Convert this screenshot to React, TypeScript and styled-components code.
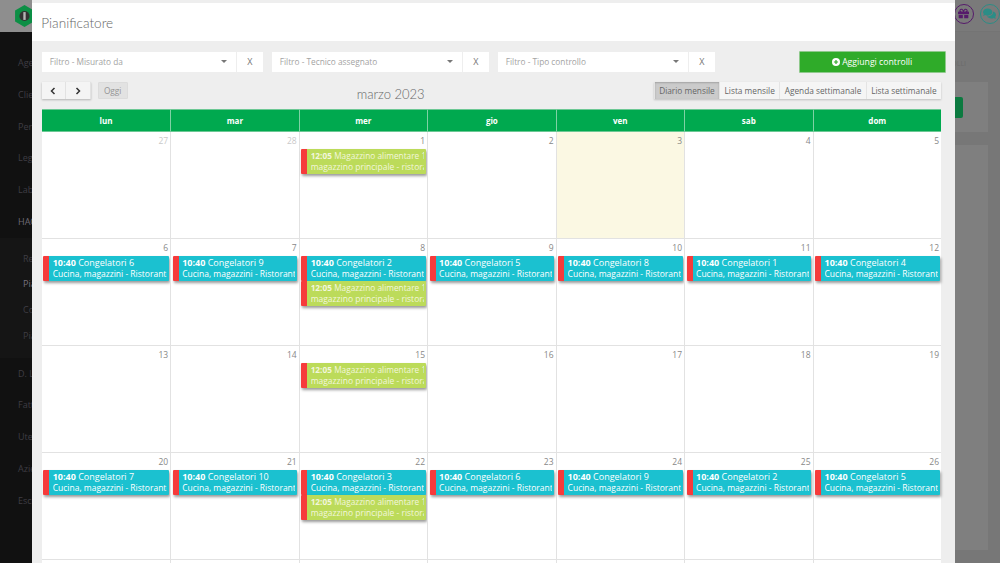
import React from "react";
import styled, { createGlobalStyle } from "styled-components";
import { FaGift, FaComments } from "react-icons/fa";

const GlobalStyle = createGlobalStyle`
  html, body {
    margin: 0;
    height: 100%;
    overflow: hidden;
    background: #777;
    font-family: "Open Sans", "Liberation Sans", sans-serif;
  }
  * { box-sizing: border-box; }
`;

type Kind = "cold" | "store";
type CalEvent = { time: string; title: string; place: string; kind: Kind };

const cold = (n: number): CalEvent => ({
  time: "10:40",
  title: `Congelatori ${n}`,
  place: "Cucina, magazzini - Ristorante",
  kind: "cold",
});
const store: CalEvent = {
  time: "12:05",
  title: "Magazzino alimentare 1",
  place: "magazzino principale - ristorante",
  kind: "store",
};

type Day = { n: number; muted?: boolean; today?: boolean; events?: CalEvent[] };

const weeks: Day[][] = [
  [
    { n: 27, muted: true },
    { n: 28, muted: true },
    { n: 1, events: [store] },
    { n: 2 },
    { n: 3, today: true },
    { n: 4 },
    { n: 5 },
  ],
  [
    { n: 6, events: [cold(6)] },
    { n: 7, events: [cold(9)] },
    { n: 8, events: [cold(2), store] },
    { n: 9, events: [cold(5)] },
    { n: 10, events: [cold(8)] },
    { n: 11, events: [cold(1)] },
    { n: 12, events: [cold(4)] },
  ],
  [
    { n: 13 },
    { n: 14 },
    { n: 15, events: [store] },
    { n: 16 },
    { n: 17 },
    { n: 18 },
    { n: 19 },
  ],
  [
    { n: 20, events: [cold(7)] },
    { n: 21, events: [cold(10)] },
    { n: 22, events: [cold(3), store] },
    { n: 23, events: [cold(6)] },
    { n: 24, events: [cold(9)] },
    { n: 25, events: [cold(2)] },
    { n: 26, events: [cold(5)] },
  ],
  [
    { n: 27 },
    { n: 28 },
    { n: 29 },
    { n: 30 },
    { n: 31 },
    { n: 1, muted: true },
    { n: 2, muted: true },
  ],
];

const dayNames = ["lun", "mar", "mer", "gio", "ven", "sab", "dom"];

const App = () => {
  return (
    <>
      <GlobalStyle />
      <Page>
        <Sidebar>
          <Brand>
            <Logo viewBox="0 0 24 28">
              <polygon points="12,0 24,7 24,21 12,28 0,21 0,7" fill="#0c8f45" />
              <circle cx="12" cy="14" r="6.5" fill="#333" />
              <rect x="10.5" y="9" width="3" height="10" fill="#b5b5b5" />
            </Logo>
          </Brand>
          <MenuList>
            <MenuItem>Agenda</MenuItem>
            <MenuItem>Clienti</MenuItem>
            <MenuItem>Personale</MenuItem>
            <MenuItem>Legionella</MenuItem>
            <MenuItem>Laboratorio</MenuItem>
            <MenuItem $strong>HACCP</MenuItem>
            <SubMenu>
              <SubItem>Registri</SubItem>
              <SubItem $active>Pianificatore</SubItem>
              <SubItem>Controlli</SubItem>
              <SubItem>Piani</SubItem>
            </SubMenu>
            <MenuItem>D. Lgs</MenuItem>
            <MenuItem>Fatture</MenuItem>
            <MenuItem>Utenti</MenuItem>
            <MenuItem>Azienda</MenuItem>
            <MenuItem>Esci</MenuItem>
          </MenuList>
        </Sidebar>
        <Main>
          <TopBar>
            <RoundIcon $color="#561a6b"><FaGift size={11} /></RoundIcon>
            <RoundIcon $color="#2c8d86"><FaComments size={13} /></RoundIcon>
          </TopBar>
          <Content>
            <BackTitle>CONTROLLI</BackTitle>
            <BackCard><BackButton /></BackCard>
            <BackCard $tall />
          </Content>
        </Main>
        <Modal>
          <ModalHeader>Pianificatore</ModalHeader>
          <ModalBody>
            <FilterRow>
              <Filter label="Filtro - Misurato da" width={221} />
              <Filter label="Filtro - Tecnico assegnato" width={217} />
              <Filter label="Filtro - Tipo controllo" width={217} />
              <AddButton>
                <PlusDisc viewBox="0 0 10 10">
                  <circle cx="5" cy="5" r="5" fill="#fff" />
                  <path d="M5 2.4v5.2M2.4 5h5.2" stroke="#2eaa28" strokeWidth="1.5" />
                </PlusDisc>
                Aggiungi controlli
              </AddButton>
            </FilterRow>
            <Toolbar>
              <ToolGroup>
                <NavGroup>
                  <NavButton aria-label="Precedente">
                    <Chevron viewBox="0 0 8 10"><path d="M5.5 2 2.5 5l3 3" /></Chevron>
                  </NavButton>
                  <NavButton aria-label="Successivo">
                    <Chevron viewBox="0 0 8 10"><path d="m2.5 2 3 3-3 3" /></Chevron>
                  </NavButton>
                </NavGroup>
                <TodayButton>Oggi</TodayButton>
              </ToolGroup>
              <MonthTitle>marzo 2023</MonthTitle>
              <ViewGroup>
                <ViewButton $active>Diario mensile</ViewButton>
                <ViewButton>Lista mensile</ViewButton>
                <ViewButton>Agenda settimanale</ViewButton>
                <ViewButton>Lista settimanale</ViewButton>
              </ViewGroup>
            </Toolbar>
            <Calendar>
              <HeadRow>
                {dayNames.map((d) => (
                  <HeadCell key={d}>{d}</HeadCell>
                ))}
              </HeadRow>
              {weeks.map((week) => (
                <Week key={week[0].n}>
                  {week.map((day) => (
                    <DayCell key={day.n} $today={day.today}>
                      <DayNumber $muted={day.muted}>{day.n}</DayNumber>
                      {day.events?.map((ev) => (
                        <EventChip key={ev.title} $kind={ev.kind}>
                          <EventTitle $kind={ev.kind}><b>{ev.time}</b> {ev.title}</EventTitle>
                          <EventPlace>{ev.place}</EventPlace>
                        </EventChip>
                      ))}
                    </DayCell>
                  ))}
                </Week>
              ))}
            </Calendar>
          </ModalBody>
        </Modal>
      </Page>
    </>
  );
};

const Filter = ({ label, width }: { label: string; width: number }) => (
  <FilterBox $width={width}>
    <FilterSelect>
      <span>{label}</span>
      <Caret />
    </FilterSelect>
    <ClearButton>X</ClearButton>
  </FilterBox>
);

const Page = styled.div`
  position: relative;
  width: 1000px;
  height: 563px;
  overflow: hidden;
  display: flex;
`;

const Sidebar = styled.nav`
  width: 180px;
  flex: none;
  background: #111;
`;

const Brand = styled.div`
  height: 32px;
  background: #8e8e8e;
  padding: 5px 0 0 15px;
`;

const Logo = styled.svg`
  display: block;
  width: 19px;
  height: 22px;
`;

const MenuList = styled.div`
  padding-top: 15px;
`;

const MenuItem = styled.div<{ $strong?: boolean }>`
  height: 31.8px;
  padding-left: 18px;
  font-size: 9px;
  line-height: 31.8px;
  color: ${(p) => (p.$strong ? "#6f6b76" : "#3f3d44")};
`;

const SubMenu = styled.div`
  padding: 8px 0 9px;
  background: #151515;
`;

const SubItem = styled.div<{ $active?: boolean }>`
  height: 25.7px;
  padding-left: 23px;
  font-size: 9px;
  line-height: 25.7px;
  color: ${(p) => (p.$active ? "#77727f" : "#3f3d44")};
`;

const Main = styled.div`
  flex: 1;
  min-width: 0;
  display: flex;
  flex-direction: column;
`;

const TopBar = styled.header`
  height: 32px;
  flex: none;
  display: flex;
  align-items: center;
  justify-content: flex-end;
  gap: 6px;
  padding: 0 0.5px 4px 0;
  border-bottom: 1px solid #747474;
  background: #7a7a7a;
`;

const RoundIcon = styled.span<{ $color: string }>`
  width: 20px;
  height: 20px;
  border-radius: 50%;
  border: 1.5px solid ${(p) => p.$color};
  color: ${(p) => p.$color};
  display: flex;
  align-items: center;
  justify-content: center;
`;

const Content = styled.main`
  flex: 1;
  min-height: 0;
  background: #777;
  padding: 27px 12px 0 0;
  display: flex;
  flex-direction: column;
  align-items: flex-end;
`;

const BackTitle = styled.div`
  height: 24px;
  margin-right: 22px;
  color: #6b6b6b;
  font-size: 7px;
  line-height: 10px;
`;

const BackCard = styled.div<{ $tall?: boolean }>`
  width: 100%;
  height: ${(p) => (p.$tall ? 420 : 51)}px;
  margin-bottom: 13px;
  padding-top: 15px;
  display: flex;
  justify-content: flex-end;
  background: #7f7f7f;
`;

const BackButton = styled.div`
  width: 41px;
  height: 21px;
  margin-right: 25px;
  border-radius: 2px;
  background: #0c7a40;
`;

const Modal = styled.section`
  position: absolute;
  left: 32.3px;
  top: 0;
  width: 922.4px;
  height: 563px;
  padding-top: 3px;
  overflow: hidden;
  background: #eeeeee;
  display: flex;
  flex-direction: column;
`;

const ModalHeader = styled.h2`
  margin: 0;
  height: 38px;
  flex: none;
  background: #fff;
  padding: 11px 0 0 9px;
  font-family: Lato, "Open Sans", sans-serif;
  font-size: 13.6px;
  line-height: 18px;
  font-weight: 300;
  color: #666;
`;

const ModalBody = styled.div`
  flex: 1;
  min-height: 0;
  padding: 10px 13.7px 0 9.4px;
  display: flex;
  flex-direction: column;
`;

const FilterRow = styled.div`
  display: flex;
  align-items: center;
  height: 22px;
  flex: none;
  gap: 9px;
`;

const FilterBox = styled.div<{ $width: number }>`
  width: ${(p) => p.$width}px;
  height: 20px;
  display: flex;
  gap: 1px;
`;

const FilterSelect = styled.div`
  flex: 1;
  background: #fff;
  display: flex;
  align-items: center;
  justify-content: space-between;
  padding: 0 9px 1px 8px;
  font-size: 8.3px;
  color: #a3a3a3;
`;

const Caret = styled.i`
  width: 0;
  height: 0;
  border-left: 3px solid transparent;
  border-right: 3px solid transparent;
  border-top: 3px solid #777;
`;

const ClearButton = styled.div`
  width: 25.5px;
  background: #fff;
  text-align: center;
  font-size: 9px;
  line-height: 19px;
  color: #777;
`;

const AddButton = styled.button`
  margin-left: auto;
  margin-right: -4.7px;
  width: 147px;
  height: 22px;
  border: 1px solid #8fc98c;
  border-radius: 1px;
  background: #2fab29;
  color: #fff;
  font-family: inherit;
  font-size: 8.7px;
  display: flex;
  align-items: center;
  justify-content: center;
  gap: 2px;
  padding: 0 0 1px;
`;

const PlusDisc = styled.svg`
  width: 8px;
  height: 8px;
`;

const Toolbar = styled.div`
  margin-top: 9px;
  height: 27.3px;
  flex: none;
  display: grid;
  grid-template-columns: 315px auto 1fr;
  align-items: start;
`;

const ToolGroup = styled.div`
  display: flex;
  gap: 7px;
`;

const NavGroup = styled.div`
  display: flex;
  box-shadow: 0 1px 2px rgba(0, 0, 0, 0.25);
`;

const NavButton = styled.button`
  width: 24.5px;
  height: 17px;
  border: 0;
  border-right: 1px solid #e2e2e2;
  background: #f4f4f4;
  padding: 0;
  display: flex;
  align-items: center;
  justify-content: center;
`;

const Chevron = styled.svg`
  width: 8px;
  height: 10px;
  fill: none;
  stroke: #333;
  stroke-width: 1.5;
`;

const TodayButton = styled.button`
  width: 30px;
  height: 17px;
  border: 1px solid #dcdcdc;
  border-radius: 1px;
  background: #e2e2e2;
  padding: 0;
  font-family: inherit;
  font-size: 8.3px;
  color: #959595;
`;

const MonthTitle = styled.h3`
  margin: 3px 0 0;
  font-family: Lato, "Open Sans", sans-serif;
  font-size: 13px;
  line-height: 18px;
  font-weight: 300;
  color: #666;
`;

const ViewGroup = styled.div`
  justify-self: end;
  display: flex;
  box-shadow: 0 1px 2px rgba(0, 0, 0, 0.2);
`;

const ViewButton = styled.button<{ $active?: boolean }>`
  height: 17px;
  border: 0;
  border-left: 1px solid #e4e4e4;
  padding: 0 4.4px;
  background: ${(p) => (p.$active ? "#cbcbcb" : "#f5f5f5")};
  box-shadow: ${(p) => (p.$active ? "inset 0 1px 2px rgba(0,0,0,.2)" : "none")};
  font-family: inherit;
  font-size: 8.3px;
  color: #666;
  white-space: nowrap;
`;

const Calendar = styled.div`
  display: flex;
  flex-direction: column;
`;

const HeadRow = styled.div`
  height: 23px;
  flex: none;
  display: grid;
  grid-template-columns: repeat(7, minmax(0, 1fr));
  background: #00a94f;
`;

const HeadCell = styled.div`
  border-left: 1px solid #7fd1a4;
  border-top: 1px solid #6cc894;
  border-bottom: 1px solid #6cc894;
  color: #fff;
  font-size: 8px;
  font-weight: 700;
  line-height: 21px;
  text-align: center;
  &:first-child { border-left: 0; }
`;

const Week = styled.div`
  height: 107px;
  flex: none;
  display: grid;
  grid-template-columns: repeat(7, minmax(0, 1fr));
  border-bottom: 1px solid #e2e2e2;
  background: #fff;
`;

const DayCell = styled.div<{ $today?: boolean }>`
  min-width: 0;
  border-left: 1px solid #e2e2e2;
  background: ${(p) => (p.$today ? "#fbf8e3" : "#fff")};
  padding-top: 3px;
  &:first-child { border-left: 0; }
`;

const DayNumber = styled.div<{ $muted?: boolean }>`
  height: 14px;
  padding-right: 2px;
  text-align: right;
  font-size: 8.5px;
  line-height: 12px;
  color: ${(p) => (p.$muted ? "#c9c9c9" : "#888")};
`;

const EventChip = styled.div<{ $kind: Kind }>`
  margin: 0 1.5px 0.5px 1.5px;
  height: 24.5px;
  padding: 1px 2px 0 3.5px;
  border-left: 6px solid #f63b3b;
  border-radius: 1px;
  background: ${(p) => (p.$kind === "cold" ? "#1bc1d0" : "#bcdb5a")};
  color: ${(p) => (p.$kind === "cold" ? "#fff" : "#f2f6dd")};
  box-shadow: 1px 2px 3px rgba(0, 0, 0, 0.4);
  line-height: 11px;
`;

const EventTitle = styled.div<{ $kind: Kind }>`
  font-size: ${(p) => (p.$kind === "cold" ? 9 : 8.3)}px;
  white-space: nowrap;
  overflow: hidden;
`;

const EventPlace = styled.div`
  font-size: 8.5px;
  white-space: nowrap;
  overflow: hidden;
`;

export default App;
